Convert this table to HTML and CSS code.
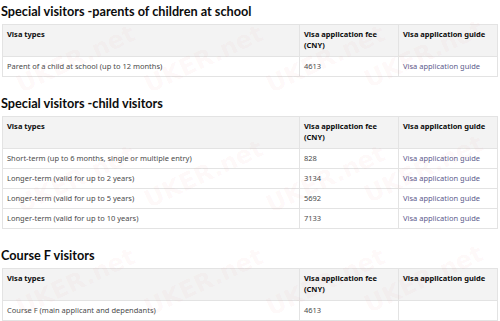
FILE: index.html
```html
<!DOCTYPE html>
<html>
<head>
<meta charset="utf-8">
<link rel="stylesheet" href="styles.css">
</head>
<body>
<main class="page">
  <section class="block">
    <h2 class="title">Special visitors -parents of children at school</h2>
    <table class="fees">
      <thead>
        <tr><th class="c1">Visa types</th><th class="c2">Visa application fee (CNY)</th><th class="c3">Visa application guide</th></tr>
      </thead>
      <tbody>
        <tr><td>Parent of a child at school (up to 12 months)</td><td>4613</td><td><a href="#">Visa application guide</a></td></tr>
      </tbody>
    </table>
  </section>
  <section class="block">
    <h2 class="title">Special visitors -child visitors</h2>
    <table class="fees">
      <thead>
        <tr><th class="c1">Visa types</th><th class="c2">Visa application fee (CNY)</th><th class="c3">Visa application guide</th></tr>
      </thead>
      <tbody>
        <tr><td>Short-term (up to 6 months, single or multiple entry)</td><td>828</td><td><a href="#">Visa application guide</a></td></tr>
        <tr><td>Longer-term (valid for up to 2 years)</td><td>3134</td><td><a href="#">Visa application guide</a></td></tr>
        <tr><td>Longer-term (valid for up to 5 years)</td><td>5692</td><td><a href="#">Visa application guide</a></td></tr>
        <tr><td>Longer-term (valid for up to 10 years)</td><td>7133</td><td><a href="#">Visa application guide</a></td></tr>
      </tbody>
    </table>
  </section>
  <section class="block">
    <h2 class="title">Course F visitors</h2>
    <table class="fees">
      <thead>
        <tr><th class="c1">Visa types</th><th class="c2">Visa application fee (CNY)</th><th class="c3">Visa application guide</th></tr>
      </thead>
      <tbody>
        <tr><td>Course F (main applicant and dependants)</td><td>4613</td><td></td></tr>
      </tbody>
    </table>
  </section>
</main>
<div class="marks" aria-hidden="true">
  <span class="mark m1">UKER.net</span>
  <span class="mark m2">UKER.net</span>
  <span class="mark m3">UKER.net</span>
  <span class="mark m4">UKER.net</span>
  <span class="mark m5">UKER.net</span>
  <span class="mark m6">UKER.net</span>
  <span class="mark m7">UKER.net</span>
  <span class="mark m8">UKER.net</span>
  <span class="mark m9">UKER.net</span>
  <span class="mark m10">UKER.net</span>
  <span class="mark m11">UKER.net</span>
  <span class="mark m12">UKER.net</span>
</div>
</body>
</html>
```
FILE: styles.css
```css
html, body {
  margin: 0;
  padding: 0;
  background: #ffffff;
}
body {
  font-family: "Noto Sans", "Liberation Sans", sans-serif;
  color: #0b0c0c;
  overflow: hidden;
  width: 500px;
  height: 321px;
  position: relative;
}
.page {
  padding: 3px 3px 0 2px;
}
.block {
  margin-top: 18px;
}
.block:first-child {
  margin-top: 0;
}
.title {
  font-family: Lato, "Noto Sans", sans-serif;
  font-size: 12.7px;
  line-height: 16px;
  font-weight: 700;
  margin: 0 0 5px -1px;
  color: #0b0c0c;
}
.fees {
  width: 495px;
  border-collapse: collapse;
  table-layout: fixed;
  font-size: 7.5px;
  line-height: 11px;
}
.fees th, .fees td {
  border: 1px solid #e3e3e3;
  text-align: left;
  vertical-align: top;
  padding: 4px 4px 0 4px;
}
.fees th {
  background: #f3f3f3;
  font-weight: 700;
  height: 27px;
  color: #0b0c0c;
}
.fees td {
  height: 15px;
  color: #4a4a4a;
}
.fees .c1 { width: 288px; }
.fees .c2 { width: 90px; }
.fees .c3 { width: 90px; }
.fees a {
  color: #5b5a8c;
  text-decoration: none;
}
.marks {
  position: absolute;
  inset: 0;
  pointer-events: none;
}
.mark {
  position: absolute;
  font-family: "DejaVu Sans", sans-serif;
  font-weight: 700;
  font-size: 24px;
  color: rgba(235, 90, 90, 0.045);
  transform: rotate(-25deg);
  white-space: nowrap;
}
.m1 { left: 12px; top: 45px; }
.m2 { left: 140px; top: 45px; }
.m3 { left: 262px; top: 45px; }
.m4 { left: 360px; top: 40px; }
.m5 { left: 12px; top: 165px; }
.m6 { left: 140px; top: 160px; }
.m7 { left: 262px; top: 165px; }
.m8 { left: 360px; top: 155px; }
.m9 { left: 12px; top: 268px; }
.m10 { left: 140px; top: 268px; }
.m11 { left: 262px; top: 268px; }
.m12 { left: 360px; top: 265px; }
```
